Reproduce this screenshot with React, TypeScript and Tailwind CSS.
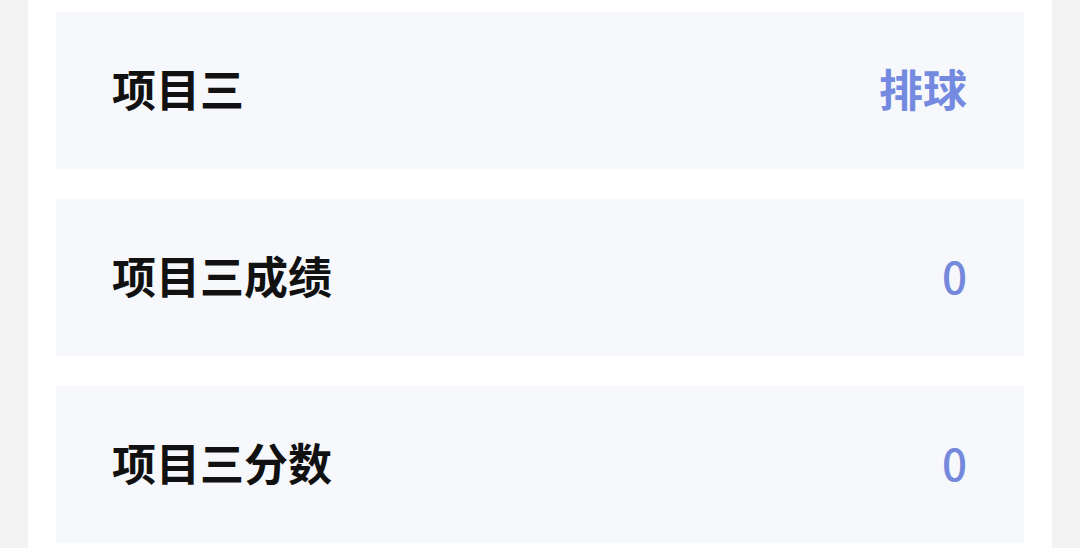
export default function App() {
  const rows = [
    { label: "项目三", value: "排球", numeric: false },
    { label: "项目三成绩", value: "0", numeric: true },
    { label: "项目三分数", value: "0", numeric: true },
  ];
  return (
    <div
      className="w-[1080px] h-[548px] overflow-hidden bg-[#f3f3f4] px-[28px]"
      style={{ fontFamily: '"Noto Sans CJK SC", "Noto Sans", sans-serif' }}
    >
      <div className="h-full bg-white px-[28px] pt-[12px] flex flex-col gap-[30px]">
        {rows.map((r, i) => (
          <div
            key={i}
            className="h-[157px] shrink-0 bg-[#f6f8fb] pl-[56px] pr-[57px] pb-[6px] flex items-center justify-between"
          >
            <span className="text-[44px] font-bold text-[#111111] leading-none">{r.label}</span>
            <span
              className={
                r.numeric
                  ? "text-[44px] font-medium text-[#7589dc] leading-none"
                  : "text-[44px] font-semibold text-[#738ae0] leading-none"
              }
            >
              {r.value}
            </span>
          </div>
        ))}
      </div>
    </div>
  );
}
